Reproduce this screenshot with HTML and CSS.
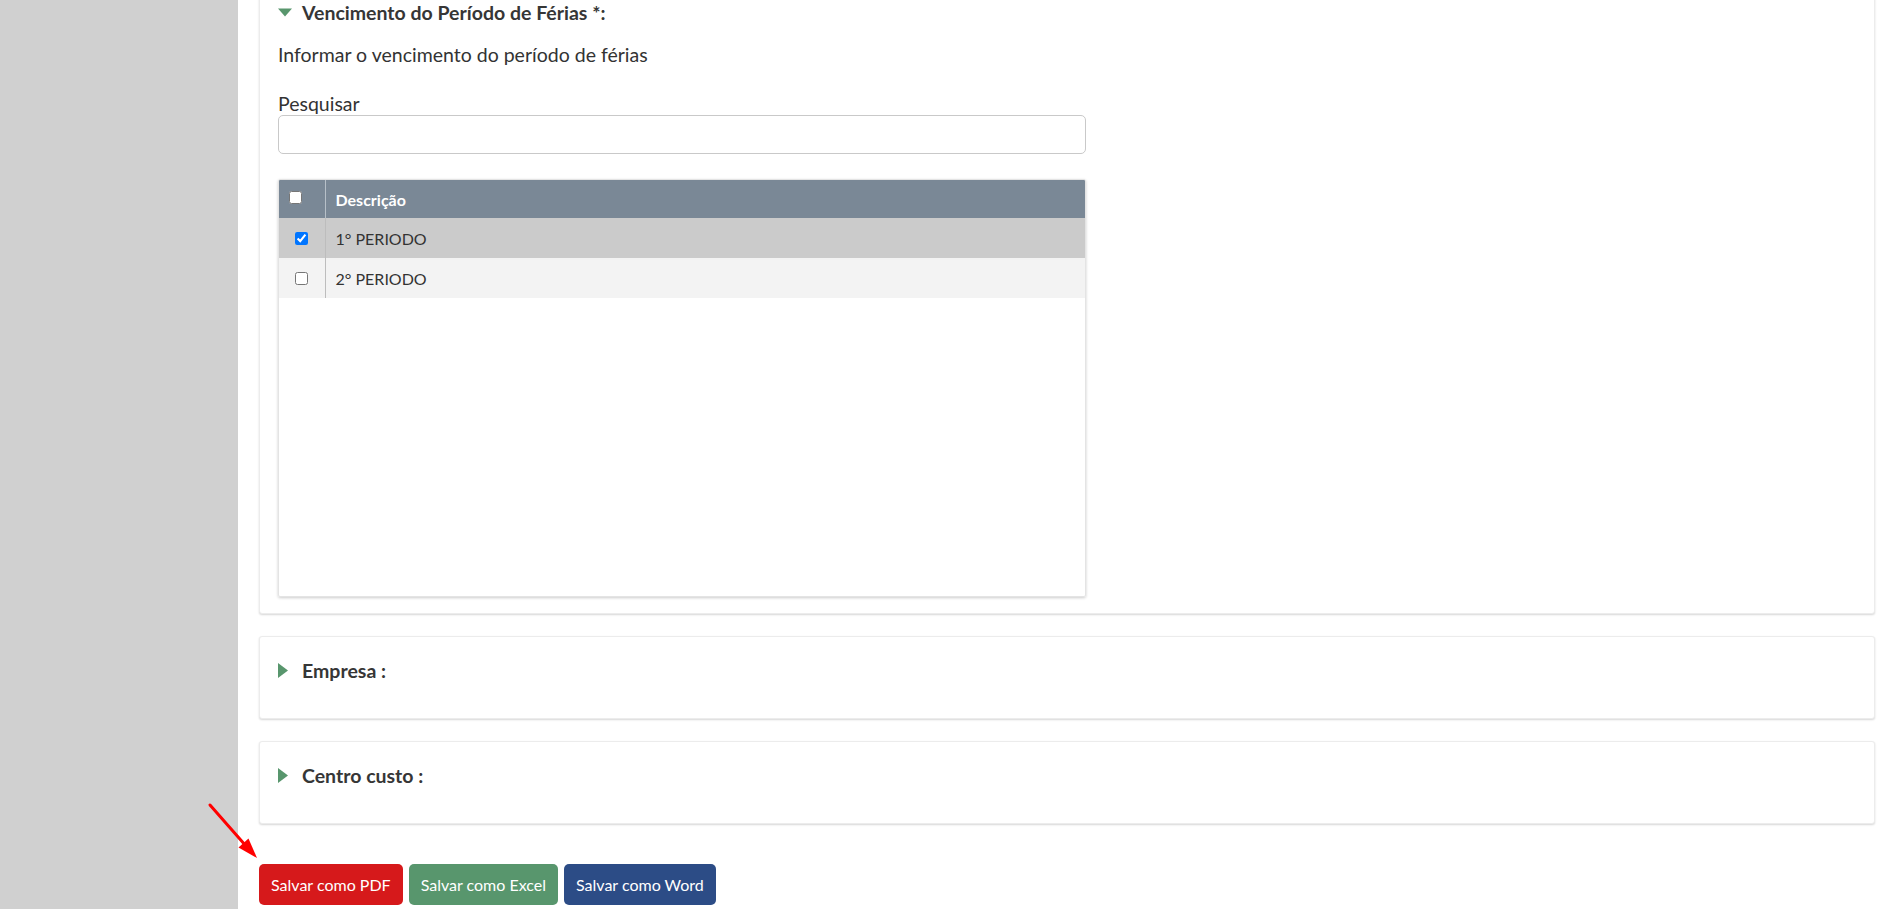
FILE: index.html
```html
<!DOCTYPE html>
<html lang="pt-BR">
<head>
<meta charset="utf-8">
<title>Relatório</title>
<link rel="stylesheet" href="styles.css">
</head>
<body>
<div class="layout">
  <aside class="sidebar"></aside>
  <main class="content">
    <section class="card card-open">
      <h3 class="card-title">
        <svg class="caret" width="14" height="15" viewBox="0 0 14 15"><polygon points="0,3.5 14,3.5 7,11.5" fill="#58966d"/></svg>
        Vencimento do Período de Férias *:
      </h3>
      <p class="hint">Informar o vencimento do período de férias</p>
      <label class="field-label" for="busca">Pesquisar</label>
      <input class="search" id="busca" type="text">
      <div class="grid">
        <table class="grid-table">
          <thead>
            <tr>
              <th class="col-check col-check-head"><input type="checkbox" class="check"></th>
              <th class="col-desc">Descrição</th>
            </tr>
          </thead>
          <tbody>
            <tr class="row-selected">
              <td class="col-check"><input type="checkbox" class="check" checked></td>
              <td class="col-desc">1° PERIODO</td>
            </tr>
            <tr class="row-alt">
              <td class="col-check"><input type="checkbox" class="check"></td>
              <td class="col-desc">2° PERIODO</td>
            </tr>
          </tbody>
        </table>
      </div>
    </section>

    <section class="card card-closed">
      <h3 class="card-title">
        <svg class="caret" width="14" height="15" viewBox="0 0 14 15"><polygon points="0,0 10,7.5 0,15" fill="#58966d"/></svg>
        Empresa :
      </h3>
    </section>

    <section class="card card-closed">
      <h3 class="card-title">
        <svg class="caret" width="14" height="15" viewBox="0 0 14 15"><polygon points="0,0 10,7.5 0,15" fill="#58966d"/></svg>
        Centro custo :
      </h3>
    </section>

    <div class="actions">
      <button class="btn btn-pdf" type="button">Salvar como PDF</button>
      <button class="btn btn-excel" type="button">Salvar como Excel</button>
      <button class="btn btn-word" type="button">Salvar como Word</button>
    </div>
  </main>
</div>

<svg class="annotation-arrow" width="70" height="70" viewBox="0 0 70 70">
  <line x1="10" y1="10" x2="46" y2="51" stroke="#ff0000" stroke-width="3" stroke-linecap="round"/>
  <polygon points="57,63 38.5,52.5 48.5,43.5" fill="#ff0000"/>
</svg>
</body>
</html>
```

FILE: styles.css
```css
* {
  box-sizing: border-box;
}

html,
body {
  margin: 0;
  padding: 0;
}

body {
  font-family: Lato, "Noto Sans", sans-serif;
  color: #333;
  background: #fff;
  overflow: hidden;
  position: relative;
  height: 909px;
}

.layout {
  display: flex;
  height: 909px;
}

.sidebar {
  flex: none;
  width: 238px;
  background: #d0d0d0;
}

.content {
  flex: 1;
  display: flex;
  flex-direction: column;
  gap: 22px;
  padding: 0 17px 0 21px;
  margin-top: -22px;
}

.card {
  background: #fff;
  border: 1px solid #ececec;
  border-radius: 3px;
  box-shadow: 0 1px 2px rgba(0, 0, 0, 0.16);
  padding: 22px 18px 16px;
}

.card-closed {
  padding-bottom: 36px;
}

.card-title {
  margin: 0;
  display: flex;
  align-items: center;
  gap: 10px;
  font-size: 19.5px;
  line-height: 23px;
  font-weight: 700;
  color: #363636;
}

.caret {
  flex: none;
  display: block;
}

.hint {
  margin: 19px 0 0;
  font-size: 19.5px;
  line-height: 23px;
}

.field-label {
  display: block;
  margin-top: 26px;
  font-size: 19.5px;
  line-height: 23px;
}

.search {
  display: block;
  width: 808px;
  height: 39px;
  margin: 0;
  border: 1px solid #c9c9c9;
  border-radius: 5px;
  background: #fff;
  font: inherit;
}

.grid {
  width: 808px;
  height: 418px;
  margin-top: 25px;
  border: 1px solid #e4e4e4;
  border-radius: 2px;
  box-shadow: 0 1px 3px rgba(0, 0, 0, 0.2);
  overflow: hidden;
}

.grid-table {
  width: 100%;
  border-collapse: collapse;
  font-size: 16px;
}

.grid-table th,
.grid-table td {
  padding: 0;
  text-align: left;
}

.grid-table thead tr {
  height: 38px;
  background: #7a8896;
  color: #fff;
}

.grid-table th.col-desc {
  font-weight: 700;
  padding-left: 10px;
  border-left: 1px solid #b7c0c8;
}

.col-check {
  width: 46px;
  text-align: center;
  vertical-align: middle;
}

.grid-table th.col-check-head {
  text-align: left;
  vertical-align: top;
  padding: 11px 0 0 10px;
}

.grid-table tbody tr {
  height: 40px;
}

.grid-table td.col-desc {
  padding-left: 10px;
  border-left: 1px solid #bdbdbd;
  color: #333;
}

.row-selected {
  background: #cbcbcb;
}

.row-alt {
  background: #f3f3f3;
}

.check {
  display: block;
  width: 13px;
  height: 13px;
  margin: 0 auto;
}

.col-check-head .check {
  margin: 0;
}

.actions {
  display: flex;
  gap: 6px;
  margin-top: 18px;
}

.btn {
  height: 41px;
  padding: 0 12px;
  border: none;
  border-radius: 5px;
  color: #fff;
  font-family: inherit;
  font-size: 16px;
  cursor: pointer;
}

.btn-pdf {
  background: #d6191b;
}

.btn-excel {
  background: #58966d;
}

.btn-word {
  background: #2c4c86;
}

.annotation-arrow {
  position: absolute;
  left: 200px;
  top: 795px;
}
```
